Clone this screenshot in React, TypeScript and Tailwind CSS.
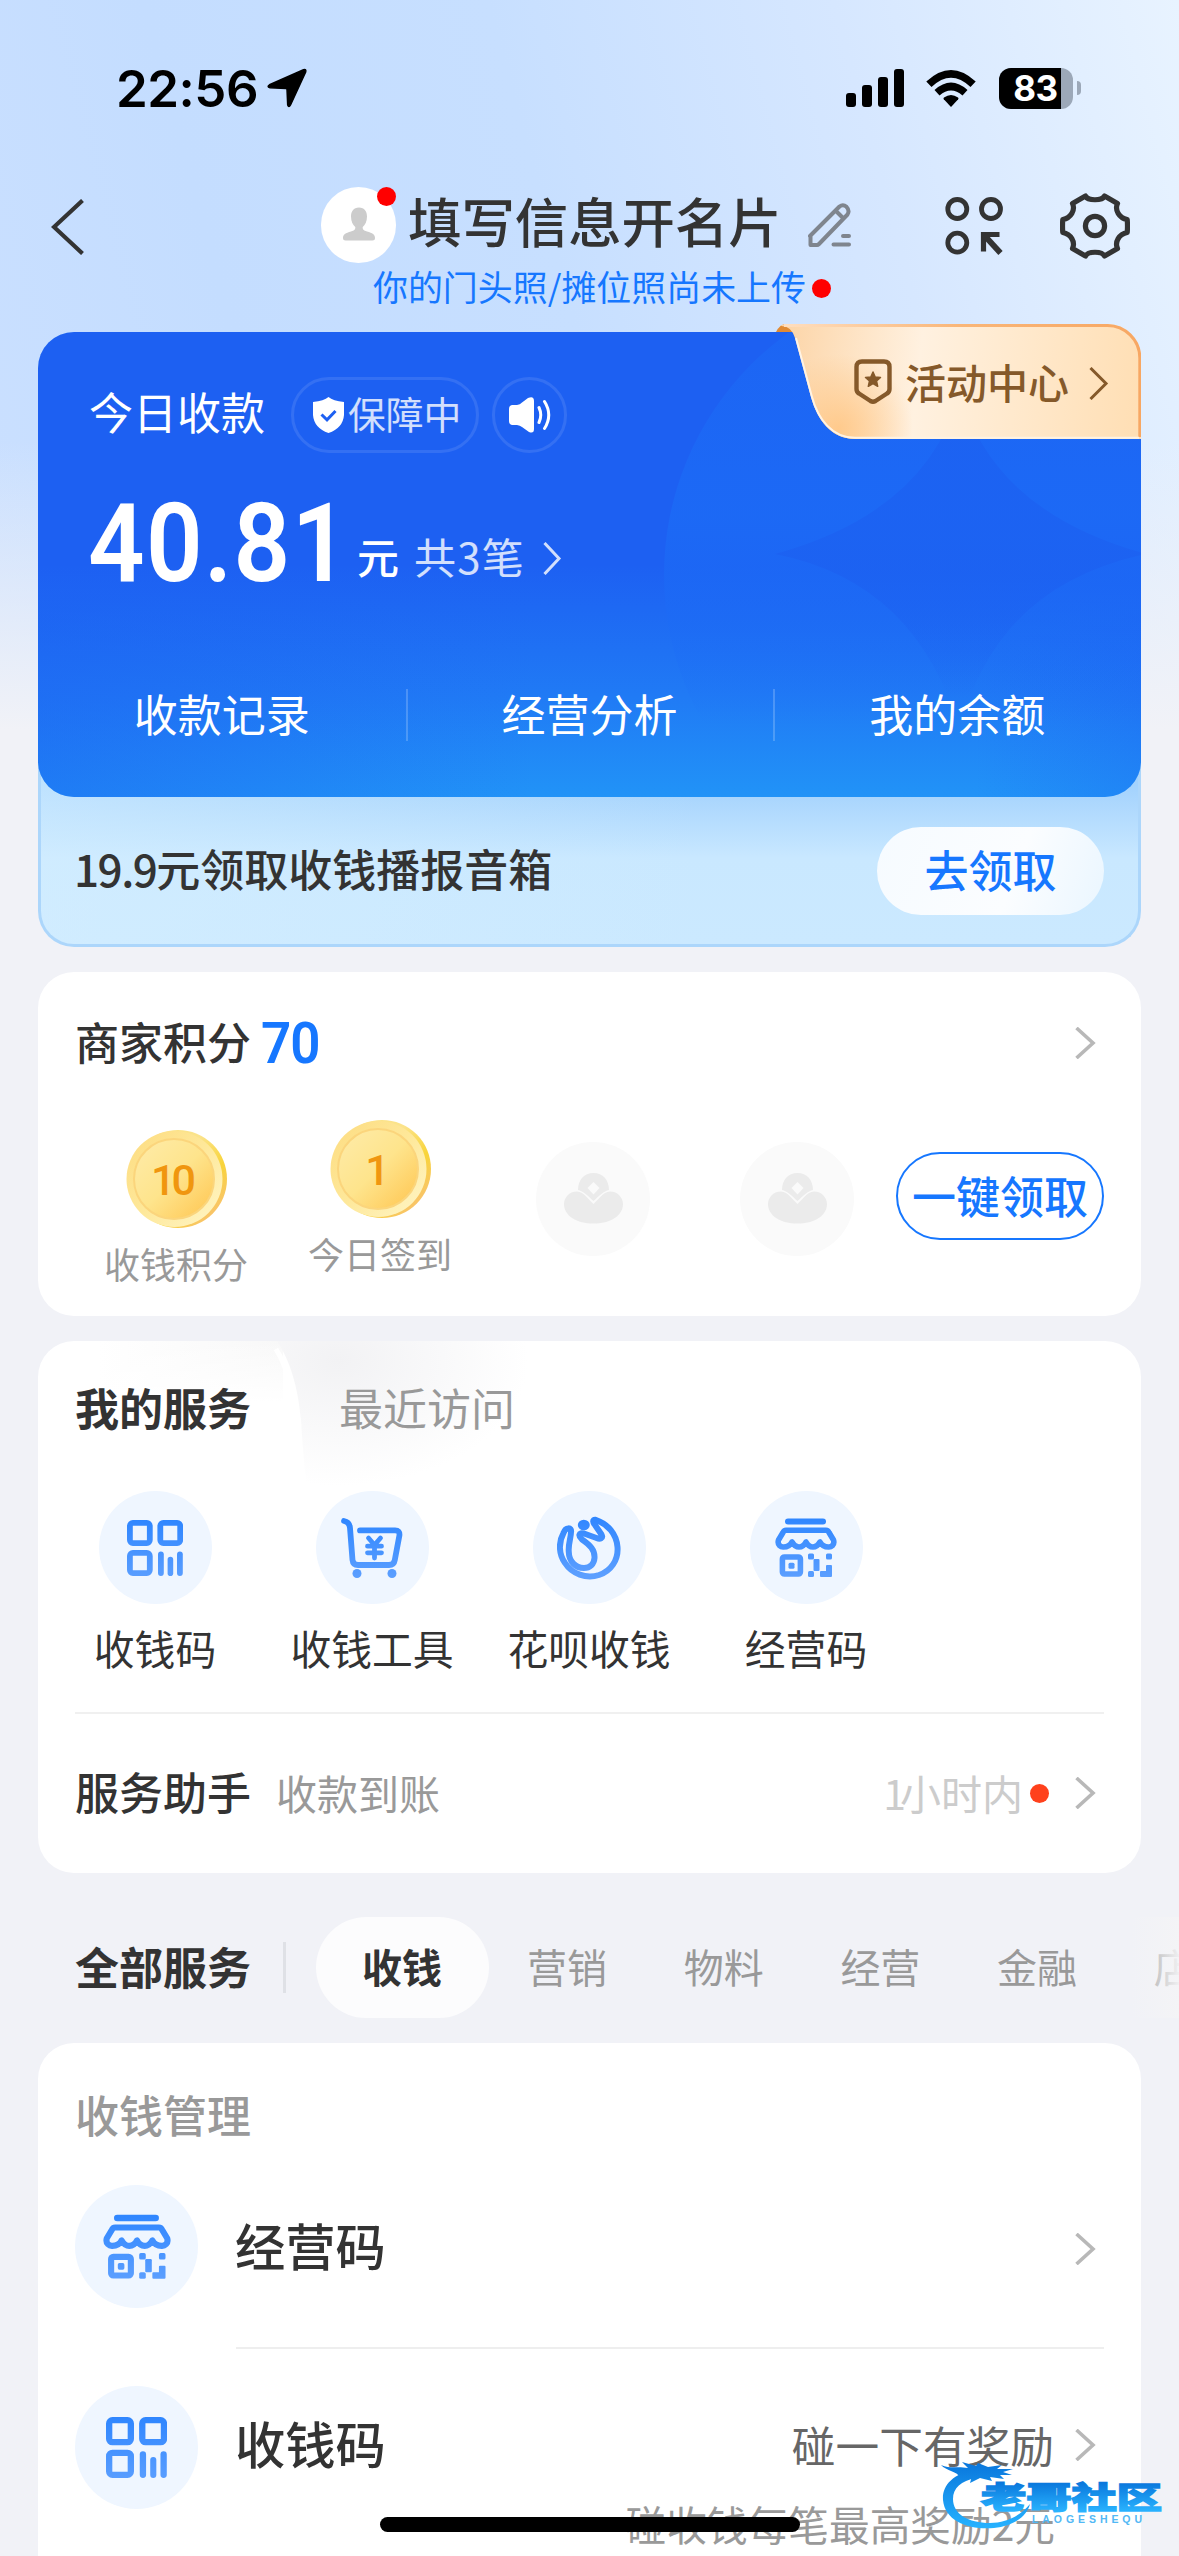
import React from "react";

const CJK = "font-['Noto_Sans_CJK_SC',sans-serif]";

function Chevron({ className = "text-[#b8b8b8]", w = 22, h = 32, sw = 3.6 }: { className?: string; w?: number; h?: number; sw?: number }) {
  return (
    <svg width={w} height={h} viewBox={`0 0 ${w} ${h}`} fill="none" stroke="currentColor" strokeWidth={sw} className={`shrink-0 ${className}`}>
      <path d={`M2.5 1 L${w - 3} ${h / 2} L2.5 ${h - 1}`} />
    </svg>
  );
}

function Grad({ id }: { id: string }) {
  return (
    <defs>
      <linearGradient id={id} x1="0" y1="0" x2="0" y2="60" gradientUnits="userSpaceOnUse">
        <stop offset="0" stopColor="#2f86ff" />
        <stop offset="1" stopColor="#5c9fff" />
      </linearGradient>
    </defs>
  );
}

function CodeIcon({ size, id }: { size: number; id: string }) {
  const c = `url(#${id})`;
  return (
    <svg width={size} height={size} viewBox="0 0 56 56" fill="none" stroke={c} strokeWidth="5.8">
      <Grad id={id} />
      <rect x="2.9" y="2.9" width="19.9" height="20.2" rx="3" />
      <rect x="33.3" y="2.9" width="19.9" height="20.2" rx="3" />
      <rect x="2.9" y="32.9" width="19.9" height="20.2" rx="3" />
      <g fill={c} stroke="none">
        <rect x="31" y="31.5" width="5.8" height="24.5" rx="2.9" />
        <rect x="40.6" y="36.7" width="5.6" height="19.3" rx="2.8" />
        <rect x="50" y="31.5" width="5.8" height="24.5" rx="2.9" />
      </g>
    </svg>
  );
}

function CartIcon({ id }: { id: string }) {
  const c = `url(#${id})`;
  return (
    <svg width="62" height="60" viewBox="0 0 62 60" fill="none" stroke={c} strokeWidth="5.8" strokeLinecap="round" strokeLinejoin="round">
      <Grad id={id} />
      <path d="M3 3 Q8.5 4 9 10 L11.5 42 Q12 47 17 47 H48 Q53 47 53.8 42 L58.4 17.500 Q59 12.500 54 12.400 H19" />
      <path d="M27.500 20 L33.500 27 L39.500 20 M26.500 28.200 H40.500 M26.500 34.800 H40.500 M33.500 27 V40" strokeWidth="4.8" />
      <g fill={c} stroke="none">
        <circle cx="16" cy="55.500" r="4.500" />
        <circle cx="51" cy="55.500" r="4.500" />
      </g>
    </svg>
  );
}

function FlowerIcon({ id }: { id: string }) {
  const c = `url(#${id})`;
  return (
    <svg width="64" height="64" viewBox="0 0 64 64" fill="none" stroke={c} strokeWidth="6" strokeLinejoin="round">
      <Grad id={id} />
      <path d="M14 16 C15 11 8.500 11 6.500 17 C1.500 26 1.500 38 8 47 C15 58 29 63 42 59 C54 55 61.500 44 60.500 31 C59.500 18 51 8 38.500 3.800 C35 3.500 36 6.500 38 9 L44.500 18.500 C46.500 22.500 43 23.500 39.500 22 L27 17.500 C21.500 16 21 20 25 23.500 C33 29 38 34 37.500 42 C37 48 33 52 27 52 C18 52 12 45 11.800 36 C11 28 14 22 14 16 Z" />
      <ellipse cx="26.800" cy="9" rx="6" ry="5.200" fill={c} stroke="none" />
    </svg>
  );
}

function ShopIcon({ w, h, id }: { w: number; h: number; id: string }) {
  const c = `url(#${id})`;
  return (
    <svg width={w} height={h} viewBox="0 0 62 60" fill="none" stroke={c} strokeWidth="5.600" strokeLinejoin="round">
      <Grad id={id} />
      <rect x="10" y="0.500" width="41" height="6" rx="3" fill={c} stroke="none" />
      <path d="M11 12.200 H51 Q53 12.200 54 14.500 L58.500 22 C60 27 56 29.200 53.500 29 C49.500 29 46.500 27 45 24 C43 27.500 40.500 29 38 29 C34.500 29 32.500 27 31 24 C29.500 27 27.500 29 24 29 C21.500 29 19 27.500 17 24 C15.500 27 12.500 29 8.500 29 C6 29.200 2 27 3.500 22 L8 14.500 Q9 12.200 11 12.200 Z" />
      <rect x="7.400" y="39" width="18" height="17" rx="2" />
      <g fill={c} stroke="none">
        <rect x="13.500" y="44.700" width="6" height="6" rx="1.500" />
        <rect x="33" y="35.500" width="6" height="6" rx="1.500" />
        <rect x="38.500" y="41" width="6" height="12" rx="1" />
        <rect x="33" y="53" width="6" height="6" rx="1.500" />
        <rect x="51" y="35.500" width="6" height="6" rx="1.500" />
        <path d="M52 47 H56 Q57 47 57 48 V58 Q57 59 56 59 H46 Q45 59 45 58 V54 Q45 53 46 53 H51 V48 Q51 47 52 47 Z" />
      </g>
    </svg>
  );
}

function StatusBar() {
  return (
    <div className="flex h-[176px] items-center pl-[116px] pr-[98px] text-black">
      <div className="w-[151px] whitespace-nowrap font-['Inter',sans-serif] text-[51px] font-semibold leading-none tracking-[-0.500px]">22:56</div>
      <svg width="40" height="40" viewBox="0 0 40 40" stroke="#000" strokeWidth="1.500" strokeLinejoin="round">
        <path d="M36.500 1.800 Q39.500 0.800 38.700 4 L23.500 37 Q21.800 40 20.700 37 L20 21.500 Q20 20.500 19 20.500 L3 19.800 Q-0.500 18.800 2.500 16.800 Z" />
      </svg>
      <div className="ml-auto flex items-center">
        <svg width="58" height="38" viewBox="0 0 58 38">
          <rect x="0" y="24" width="10" height="14" rx="3" />
          <rect x="16" y="16" width="10" height="22" rx="3" />
          <rect x="32" y="8" width="10" height="30" rx="3" />
          <rect x="48" y="0" width="10" height="38" rx="3" />
        </svg>
        <svg width="50" height="37" viewBox="0 0 50 37" className="ml-[22px]">
          <path d="M25 37 L17.800 29.300 Q17 28.300 18 27.500 Q25 22.500 32 27.500 Q33 28.300 32.200 29.300 Z" />
          <path d="M8.500 20 Q25 5 41.500 20 L36.500 25.500 Q25 15.500 13.500 25.500 Z" />
          <path d="M0.300 11.600 Q25 -11.500 49.700 11.600 L44.500 17 Q25 -1.500 5.500 17 Z" />
        </svg>
        <div className="relative ml-[23px] flex h-[41px] w-[74px] items-center overflow-hidden rounded-[12px] bg-[#9ca8b8]">
          <div className="h-full w-[62px] bg-black" />
          <span className="absolute inset-x-0 pr-[1px] text-center font-['Inter',sans-serif] text-[35px] font-bold leading-[41px] tracking-[-0.500px] text-white">83</span>
        </div>
        <div className="ml-[4px] h-[14px] w-[4px] rounded-r-full bg-[#9ca8b8]" />
      </div>
    </div>
  );
}

function NavBar() {
  return (
    <>
      <div className="flex h-[100px] items-center pl-[51px] text-[#333]">
        <svg width="33" height="56" viewBox="0 0 33 56" fill="none" stroke="currentColor" strokeWidth="4.200" className="mt-[2px]">
          <path d="M31.500 1.500 L3 28 L31.500 54.500" />
        </svg>
        <div className="relative ml-[237px] mt-[-2px] flex h-[76px] w-[75px] items-center justify-center rounded-full bg-white">
          <svg width="32" height="34" viewBox="0 0 32 34" fill="#ccc" className="mt-[-3px]">
            <path d="M16 0.500 C21.500 0.500 24 4.500 24 9.500 C24 14.500 22 18 19.700 20 C19.500 22.500 20.500 23.500 24 24.500 C29.500 26 32 27.500 32 31 Q32 33.500 29.500 33.500 H2.500 Q0 33.500 0 31 C0 27.500 2.500 26 8 24.500 C11.500 23.500 12.500 22.500 12.300 20 C10 18 8 14.500 8 9.500 C8 4.500 10.500 0.500 16 0.500 Z" />
          </svg>
          <span className="absolute right-0 top-0 h-[19px] w-[19px] rounded-full bg-[#ff0000]" />
        </div>
        <div className="ml-[12px] mt-[-12px] w-[400px] whitespace-nowrap text-[53.400px] font-medium leading-none">填写信息开名片</div>
        <svg width="43" height="44" viewBox="0 0 43 44" fill="none" stroke="#7f858e" strokeWidth="4" strokeLinejoin="round" strokeLinecap="round" className="mt-[-2px]">
          <path d="M2 33 L31.500 3.500 Q35 0.800 38.500 3.800 Q42 7.500 39.500 11.500 L11 41 Q10 42 9 42 H2.500 V33.500 M28 8 L35.500 15.500 M35 33 H41 M25.500 41.500 H41" />
        </svg>
        <svg width="58" height="59" viewBox="0 0 58 59" fill="none" stroke="currentColor" strokeWidth="4.800" className="ml-[94px]">
          <circle cx="12.300" cy="12" r="9.500" />
          <circle cx="46" cy="12" r="9.500" />
          <circle cx="12.300" cy="45.700" r="9.500" />
          <path d="M54.500 37.500 H38.500 V54.500" strokeWidth="5.200" />
          <path d="M39 38 L55.500 56" strokeWidth="5.800" />
        </svg>
        <svg width="70" height="68" viewBox="-35 -34 70 68" fill="none" stroke="currentColor" strokeWidth="5.200" strokeLinejoin="round" className="ml-[57px]">
          <path d="M-9.500 -30 C-7 -25 7 -25 9.500 -30 L22.500 -22.500 C19.500 -16 24 -8 32.200 -6.500 Q32.800 0 32.200 6.500 C24 8 19.500 16 22.500 22.500 L9.500 30 C7 25 -7 25 -9.500 30 L-22.500 22.500 C-19.500 16 -24 8 -32.200 6.500 Q-32.800 0 -32.200 -6.500 C-24 -8 -19.500 -16 -22.500 -22.500 Z" />
          <circle r="9.600" />
        </svg>
      </div>
      <div className="flex h-[56px] items-center pb-[32px] pl-[373px]">
        <span className="mt-[-3px] whitespace-nowrap text-[34.950px] leading-none text-[#1677ff]">你的门头照/摊位照尚未上传</span>
        <span className="ml-[6px] h-[19px] w-[19px] shrink-0 rounded-full bg-[#ff0000]" />
      </div>
    </>
  );
}

function ActivityBadge() {
  return (
    <div className="absolute -top-[8px] right-0 h-[115px] w-[365px]">
      <svg width="365" height="150" viewBox="0 0 365 150" className="absolute left-0 top-0">
        <defs>
          <linearGradient id="bgA" x1="0" y1="0" x2="365" y2="40" gradientUnits="userSpaceOnUse">
            <stop offset="0" stopColor="#fcd3a4" />
            <stop offset="0.400" stopColor="#fff1e0" />
            <stop offset="1" stopColor="#ffdfb5" />
          </linearGradient>
          <radialGradient id="bgB" cx="62" cy="105" r="75" gradientUnits="userSpaceOnUse">
            <stop offset="0" stopColor="#ffca8c" />
            <stop offset="1" stopColor="#ffca8c" stopOpacity="0" />
          </radialGradient>
          <linearGradient id="bgC" x1="0" y1="0" x2="365" y2="0" gradientUnits="userSpaceOnUse">
            <stop offset="0" stopColor="#ffe0c2" />
            <stop offset="0.500" stopColor="#f9b679" />
            <stop offset="1" stopColor="#f7a763" />
          </linearGradient>
        </defs>
        <path d="M0 8 Q4 0 10 0 Q17 1 17 8 Z" fill="#e08a34" />
        <path d="M4 2 Q7 0 10 0 H331 A34 34 0 0 1 365 34 V115 H79 C55 115 41 95 35 73 L19 14 Q15 1 4 2 Z" fill="url(#bgA)" />
        <path d="M10 0 H331 A34 34 0 0 1 365 34 V115 H79 C55 115 41 95 35 73 L19 14 Q15 1 10 0 Z" fill="url(#bgB)" />
        <path d="M8 1.500 H331 A32.500 32.500 0 0 1 363.800 34 V113" fill="none" stroke="url(#bgC)" strokeWidth="3" />
        <path d="M363 113.800 H79 C56 113.800 42 95 36 73 L20 14" fill="none" stroke="#fff3e4" strokeWidth="2" />
      </svg>
      <div className="relative flex h-[115px] items-center pl-[78px] pt-[2px] text-[#85592a]">
        <svg width="38" height="46" viewBox="0 0 38 46" fill="none" stroke="currentColor" strokeWidth="4.400" strokeLinejoin="round" className="mt-[-2px]">
          <path d="M8 2.500 H30 Q35.500 2.500 35.500 8 V30 Q35.500 33 33 34.500 L21.500 42 Q19 43.500 16.500 42 L5 34.500 Q2.500 33 2.500 30 V8 Q2.500 2.500 8 2.500 Z" />
          <path d="M19 13 L21.200 18 L26.500 18.500 L22.500 22 L23.700 27.300 L19 24.500 L14.300 27.300 L15.500 22 L11.500 18.500 L16.800 18 Z" fill="currentColor" strokeWidth="1.500" />
        </svg>
        <span className="ml-[13px] mt-[-3px] w-[183px] whitespace-nowrap text-[41px] font-medium leading-none">活动中心</span>
        <Chevron className="mt-[2px] text-[#85592a]" w={21} h={33} sw={3} />
      </div>
    </div>
  );
}

function IncomeCard() {
  return (
    <div className="relative mx-[38px] h-[615px] rounded-[36px] border-[3px] border-t-0 border-[#acd6fb] bg-[linear-gradient(90deg,rgba(213,239,255,0.550),rgba(213,239,255,0)_60%),linear-gradient(180deg,#a3d2fd_0%,#a3d2fd_74%,#c9e8ff_86%,#cbe9ff_100%)]">
      <div className="relative -mx-[3px] h-[465px] rounded-[36px] bg-[linear-gradient(180deg,#1d60f2_0%,#1d60f2_50%,#207af5_78%,#2193f7_100%)] text-white">
        <svg width="1103" height="465" viewBox="0 0 1103 465" className="absolute left-0 top-0">
          <defs>
            <clipPath id="cardClip"><rect width="1103" height="465" rx="36" /></clipPath>
            <linearGradient id="discFill" x1="0" y1="0" x2="0" y2="1">
              <stop offset="0" stopColor="#1c6bf6" stopOpacity="0.400" />
              <stop offset="0.400" stopColor="#1c6bf6" stopOpacity="0.800" />
              <stop offset="0.750" stopColor="#1c6bf6" stopOpacity="0" />
            </linearGradient>
            <linearGradient id="starFill" x1="0" y1="60" x2="0" y2="400" gradientUnits="userSpaceOnUse">
              <stop offset="0" stopColor="#1c5ff0" stopOpacity="0.600" />
              <stop offset="0.550" stopColor="#1c5ff0" stopOpacity="0.600" />
              <stop offset="0.900" stopColor="#1c5ff0" stopOpacity="0" />
            </linearGradient>
            <linearGradient id="leftShade" x1="0" y1="0" x2="1" y2="0">
              <stop offset="0" stopColor="#1d60f2" stopOpacity="0.450" />
              <stop offset="0.450" stopColor="#1d60f2" stopOpacity="0" />
              <stop offset="0.850" stopColor="#1d60f2" stopOpacity="0" />
              <stop offset="1" stopColor="#1d60f2" stopOpacity="0.250" />
            </linearGradient>
          </defs>
          <g clipPath="url(#cardClip)">
            <rect y="200" width="1103" height="265" fill="url(#leftShade)" />
            <circle cx="924" cy="243" r="298" fill="url(#discFill)" />
            <path d="M737 222 Q890 180 922 60 Q955 180 1108 222 Q955 255 922 400 Q880 250 737 222 Z" fill="url(#starFill)" />
          </g>
        </svg>
        <div className="relative flex h-[121px] items-end pl-[51px]">
          <span className="mb-[20px] w-[202px] whitespace-nowrap text-[44px] leading-none">今日收款</span>
          <div className="flex h-[76px] w-[188px] items-center rounded-full border-[3px] border-white/10 pl-[19px]">
            <svg width="31" height="36" viewBox="0 0 31 36">
              <path d="M15.500 0 Q20 4 31 5 V18 Q30 31 15.500 36 Q1 31 0 18 V5 Q11 4 15.500 0 Z" fill="#fff" />
              <path d="M8.500 17.500 L14 22.800 L22.500 14" fill="none" stroke="#1d60f2" strokeWidth="3" />
            </svg>
            <span className="ml-[4px] mt-[-5px] whitespace-nowrap text-[37.800px] leading-none text-white/80">保障中</span>
          </div>
          <div className="ml-[13px] flex h-[76px] w-[75px] items-center justify-center rounded-full border-[3px] border-white/10">
            <svg width="42" height="36" viewBox="0 0 42 36" fill="none" stroke="#fff" strokeWidth="3" strokeLinecap="round">
              <path d="M3 8 H8 Q11 7.500 13 5.500 L19 1 Q25 -1.500 25 4 V32 Q25 37 20 35 L13 30 Q11 28.500 8 28 H3 Q0 27.500 0 24 V12 Q0 8.500 3 8 Z" fill="#fff" stroke="none" />
              <path d="M30 10.500 Q33.500 18 30 25.500 M35.500 4.500 Q44 18 35.500 31.500" />
            </svg>
          </div>
        </div>
        <div className="relative flex h-[168px] items-start pl-[50px] pt-[37px]">
          <div className="w-[269px]">
            <span className="inline-block origin-left scale-x-[0.910] whitespace-nowrap font-['Roboto',sans-serif] text-[109px] font-semibold leading-none tracking-[1.500px]">40.81</span>
          </div>
          <span className="mt-[45px] whitespace-nowrap text-[42px] font-medium leading-none">元</span>
          <span className="ml-[15px] mt-[45px] whitespace-nowrap text-[42px] leading-none tracking-[1.200px] text-white/80">共3笔</span>
          <Chevron className="ml-[17px] mt-[52px] text-white/80" w={20} h={33} sw={3} />
        </div>
        <div className="relative grid h-[176px] grid-cols-3 pb-[4px] pt-[68px]">
          {["收款记录", "经营分析", "我的余额"].map((t, i) => (
            <div key={t} className={`flex h-[52px] items-center justify-center pb-[5px] text-[44px] leading-none ${i < 2 ? "-mr-[2px] border-r-2 border-white/20" : ""}`}>{t}</div>
          ))}
        </div>
      </div>
      <div className="flex h-[147px] items-center justify-between pl-[33px] pr-[34px]">
        <span className="mt-[-5px] whitespace-nowrap text-[44px] font-medium leading-none text-[#333]"><span className="tracking-[-1.500px]">19.9</span>元领取收钱播报音箱</span>
        <button className="flex h-[88px] w-[227px] items-center justify-center rounded-full bg-[linear-gradient(110deg,#f6fbff,#fbfdff_60%,#eaf6ff)] pb-[3px] text-[44px] font-medium leading-none text-[#1677ff]">去领取</button>
      </div>
    </div>
  );
}

function Coin({ value, label, id }: { value: string; label: string; id: string }) {
  return (
    <div className="flex w-[204px] flex-col items-center">
      <svg width="101" height="102" viewBox="0 0 101 102">
        <defs>
          <linearGradient id={`${id}e`} x1="0" y1="0" x2="1" y2="1">
            <stop offset="0.400" stopColor="#fbe38a" />
            <stop offset="0.650" stopColor="#f8d43a" />
            <stop offset="1" stopColor="#f9b98a" />
          </linearGradient>
          <linearGradient id={`${id}r`} x1="0" y1="0" x2="1" y2="1">
            <stop offset="0" stopColor="#fddc80" />
            <stop offset="0.500" stopColor="#fee89a" />
            <stop offset="1" stopColor="#fff6c8" />
          </linearGradient>
          <linearGradient id={`${id}f`} x1="0" y1="0" x2="1" y2="1">
            <stop offset="0.100" stopColor="#feeaa4" />
            <stop offset="0.500" stopColor="#fee48c" />
            <stop offset="1" stopColor="#ffc44e" />
          </linearGradient>
        </defs>
        <circle cx="52" cy="51" r="49" fill={`url(#${id}e)`} />
        <circle cx="48.500" cy="51" r="48" fill={`url(#${id}r)`} />
        <circle cx="48" cy="51" r="40" fill={`url(#${id}f)`} stroke="#fbd57c" strokeWidth="2" />
        <text x="45.500" y="67" textAnchor="middle" fontFamily="Roboto, sans-serif" fontWeight="500" fontSize="43" letterSpacing="-4" fill="#f0960f">{value}</text>
      </svg>
      <span className="mt-[15px] whitespace-nowrap text-[36px] leading-none text-[#999]">{label}</span>
    </div>
  );
}

function EmptySlot() {
  return (
    <div className="flex w-[204px] justify-center pt-[13px]">
      <div className="flex h-[114px] w-[114px] items-center justify-center rounded-full bg-[#fafafa]">
        <svg width="59" height="51" viewBox="0 0 59 51" fill="#ebebeb" className="mt-[-2px]">
          <path d="M14 17 C14 7 20 0 29.500 0 C39 0 45 7 45 17 C40 18 35 23 29.500 28 C24 23 19 18 14 17 Z" />
          <path d="M29.500 9 L35.500 15 L29.500 21.500 L23.500 15 Z" fill="#fafafa" />
          <path d="M13 18.500 C20 19 25 27 29.500 31 C34 27 39 19 46 18.500 C54 18.500 59 25 59 31 C59 43 46 50.500 29.500 50.500 C13 50.500 0 43 0 31 C0 25 5 18.500 13 18.500 Z" />
        </svg>
      </div>
    </div>
  );
}

function PointsCard() {
  return (
    <section className="mx-[38px] mt-[25px] h-[344px] rounded-[36px] bg-white">
      <div className="flex h-[142px] items-center pl-[37px] pr-[45px]">
        <span className="mt-[-4px] whitespace-nowrap text-[44px] font-medium leading-none text-[#333]">商家积分</span>
        <span className="ml-[10px] origin-left scale-x-[0.930] font-['Roboto',sans-serif] text-[57px] font-semibold leading-none tracking-[-1px] text-[#1677ff]">70</span>
        <Chevron className="ml-auto text-[#b8b8b8]" />
      </div>
      <div className="flex items-start pl-[36px]">
        <div className="pt-[14px]"><Coin value="10" label="收钱积分" id="coinA" /></div>
        <div className="pt-[4px]"><Coin value="1" label="今日签到" id="coinB" /></div>
        <div className="ml-[9px] flex pt-[15px]">
          <EmptySlot />
          <EmptySlot />
        </div>
        <button className="ml-[-3px] mt-[38px] flex h-[88px] w-[208px] shrink-0 items-center justify-center whitespace-nowrap rounded-full border-2 border-[#1677ff] pb-[3px] text-[44px] font-medium leading-none text-[#1677ff]">一键领取</button>
      </div>
    </section>
  );
}

function ServicesCard() {
  const items = [
    { t: "收钱码", icon: <CodeIcon size={56} id="gs1" /> },
    { t: "收钱工具", icon: <CartIcon id="gs2" /> },
    { t: "花呗收钱", icon: <FlowerIcon id="gs3" /> },
    { t: "经营码", icon: <ShopIcon w={62} h={60} id="gs4" /> },
  ];
  return (
    <section className="relative mx-[38px] mt-[25px] h-[532px] overflow-hidden rounded-[36px] bg-white">
      <svg width="560" height="170" viewBox="0 0 560 170" className="absolute left-0 top-0">
        <defs>
          <radialGradient id="tabShade" gradientUnits="userSpaceOnUse" cx="0" cy="0" r="1" gradientTransform="translate(300 20) scale(190 125)">
            <stop offset="0" stopColor="#f2f2f4" />
            <stop offset="0.550" stopColor="#f9f9fa" />
            <stop offset="1" stopColor="#ffffff" />
          </radialGradient>
          <linearGradient id="tabTop" x1="1" y1="0" x2="0" y2="0">
            <stop offset="0" stopColor="#f8f8f8" />
            <stop offset="1" stopColor="#ffffff" />
          </linearGradient>
          <linearGradient id="tabTopFade" x1="0" y1="0" x2="0" y2="1">
            <stop offset="0" stopColor="#fff" stopOpacity="0" />
            <stop offset="1" stopColor="#fff" />
          </linearGradient>
        </defs>
        <rect x="60" y="0" width="185" height="60" fill="url(#tabTop)" />
        <rect x="60" y="0" width="185" height="61" fill="url(#tabTopFade)" />
        <path d="M239 0 C252 20 260 45 263 80 Q266 130 272 170 H560 V0 Z" fill="url(#tabShade)" />
        <path d="M238 8 C250 28 257 52 261 85" fill="none" stroke="#fff" strokeWidth="5" />
      </svg>
      <div className="relative flex h-[136px] items-center pb-[5px] pl-[37px] text-[44px] leading-none">
        <span className="w-[264px] font-bold text-[#333]">我的服务</span>
        <span className="text-[#999]">最近访问</span>
      </div>
      <div className="relative flex h-[235px] pl-[8.500px] pt-[14px]">
        {items.map((it) => (
          <div key={it.t} className="flex w-[217px] flex-col items-center">
            <div className="flex h-[113px] w-[113px] items-center justify-center rounded-full bg-[#eff6ff]">{it.icon}</div>
            <span className="mt-[24px] whitespace-nowrap text-[40.800px] leading-none text-[#333]">{it.t}</span>
          </div>
        ))}
      </div>
      <div className="mx-[37px] h-[2px] bg-[#f0f0f0]" />
      <div className="flex h-[158px] items-center pl-[37px] pr-[45px]">
        <span className="mt-[-4px] text-[44px] font-medium leading-none text-[#333]">服务助手</span>
        <span className="ml-[25px] mt-[-2px] text-[41px] leading-none text-[#999]">收款到账</span>
        <span className="ml-auto mt-[-2px] text-[41px] leading-none text-[#ccc]"><span className="tracking-[-6px]">1</span>小时内</span>
        <span className="ml-[7px] mr-[25px] h-[19px] w-[19px] rounded-full bg-[#ff411c]" />
        <Chevron />
      </div>
    </section>
  );
}

function CategoryTabs() {
  return (
    <div className="relative flex h-[170px] items-center overflow-hidden pl-[75px] pt-[18px]">
      <span className="mt-[-3px] shrink-0 text-[44px] font-bold leading-none text-[#333]">全部服务</span>
      <span className="ml-[32px] h-[51px] w-[3px] shrink-0 bg-[#dfe1e6]" />
      <span className="ml-[30px] flex h-[101px] w-[173px] shrink-0 items-center justify-center rounded-full bg-[#fcfcfd] pb-[3px] pr-[1px] text-[40px] font-bold leading-none text-[#333]">收钱</span>
      <div className="ml-[38px] mt-[-3px] flex shrink-0 gap-[76.700px] text-[40px] leading-none text-[#999]">
        {["营销", "物料", "经营", "金融", "店铺"].map((t) => (
          <span key={t} className="whitespace-nowrap">{t}</span>
        ))}
      </div>
      <div className="absolute right-0 top-[44px] h-[101px] w-[48px] bg-[linear-gradient(90deg,rgba(244,244,246,0),rgba(244,244,246,0.950))]" />
    </div>
  );
}

function ManageCard() {
  return (
    <section className="mx-[38px] h-[540px] rounded-t-[36px] bg-white pl-[37px]">
      <h2 className="flex h-[142px] items-center text-[44px] font-medium leading-none text-[#999]">收钱管理</h2>
      <div className="flex h-[123px] items-center">
        <div className="flex h-[123px] w-[123px] items-center justify-center rounded-full bg-[#eff6ff]"><ShopIcon w={68} h={66} id="gm1" /></div>
        <span className="ml-[37px] mt-[-5px] text-[50.300px] font-medium leading-none text-[#333]">经营码</span>
        <Chevron className="ml-auto mr-[45px] mt-[4px] text-[#b8b8b8]" />
      </div>
      <div className="ml-[161px] mr-[37px] mt-[39px] h-[2px] bg-[#eee]" />
      <div className="mt-[37px] flex h-[123px] items-center">
        <div className="flex h-[123px] w-[123px] items-center justify-center rounded-full bg-[#eff6ff]"><CodeIcon size={61} id="gm2" /></div>
        <span className="ml-[37px] mt-[-11px] text-[50.300px] font-medium leading-none text-[#333]">收钱码</span>
        <span className="ml-auto mt-[-5px] text-[43.700px] leading-none text-[#666]">碰一下有奖励</span>
        <Chevron className="ml-[20px] mr-[45px] mt-[-6px] text-[#b8b8b8]" />
      </div>
      <div className="mt-[-5px] whitespace-nowrap pr-[86px] text-right text-[40.700px] leading-none text-[#999]">碰收钱每笔最高奖励2元</div>
    </section>
  );
}

function Watermark() {
  return (
    <svg width="240" height="90" viewBox="0 0 240 90" className="absolute left-[930px] top-[2450px]">
      <defs>
        <linearGradient id="wm" x1="0" y1="14" x2="0" y2="78" gradientUnits="userSpaceOnUse">
          <stop offset="0" stopColor="#0a78dd" />
          <stop offset="1" stopColor="#26b2ff" />
        </linearGradient>
        <linearGradient id="wmT" x1="0" y1="33" x2="0" y2="62" gradientUnits="userSpaceOnUse">
          <stop offset="0" stopColor="#0a78dd" />
          <stop offset="1" stopColor="#2ab4ff" />
        </linearGradient>
      </defs>
      <path d="M46 19 C22 24 12 36 13 50 C15 72 40 80 64 78 C84 76 97 66 100 54 C90 66 76 73 60 73 C38 73 23 64 23 49 C23 38 31 31 46 28 Z" fill="url(#wm)" />
      <path d="M11 15 C20 19 28 16 38 18 L32 12 L46 16 L48 13 L58 17 L72 15 L67 19 L83 19 L73 22 L82 25 L70 25 L74 29 L60 27 L62 31 L50 28 L40 33 L42 26 L30 28 C28 21 16 21 11 15 Z" fill="url(#wm)" />
      <text x="51" y="58" fontFamily="'Noto Sans CJK SC', sans-serif" fontWeight="900" fontSize="29.500" textLength="181" lengthAdjust="spacingAndGlyphs" fill="url(#wmT)" stroke="url(#wmT)" strokeWidth="1.500">老哥社区</text>
      <text x="102" y="72.500" fontFamily="'Liberation Sans', sans-serif" fontWeight="700" fontSize="10.500" textLength="110" fill="#52b8f5">LAOGESHEQU</text>
    </svg>
  );
}

export default function App() {
  return (
    <main className={`relative h-[2556px] w-[1179px] overflow-hidden bg-[#f1f2f7] ${CJK}`}>
      <div className="absolute inset-x-0 top-0 h-[760px] bg-[linear-gradient(180deg,rgba(241,242,247,0)_0%,rgba(241,242,247,0)_58%,#f1f2f7_96%),linear-gradient(75deg,#cbe0ff_0%,#c4ddff_25%,#c7dfff_50%,#d6e7ff_75%,#e8f3ff_100%)]" />
      <div className="relative">
        <StatusBar />
        <NavBar />
        <div className="relative">
          <IncomeCard />
          <div className="absolute right-[38px] top-0"><ActivityBadge /></div>
        </div>
        <PointsCard />
        <ServicesCard />
        <CategoryTabs />
        <ManageCard />
      </div>
      <Watermark />
      <div className="absolute bottom-[24px] left-[380px] h-[15px] w-[420px] rounded-full bg-black" />
    </main>
  );
}
